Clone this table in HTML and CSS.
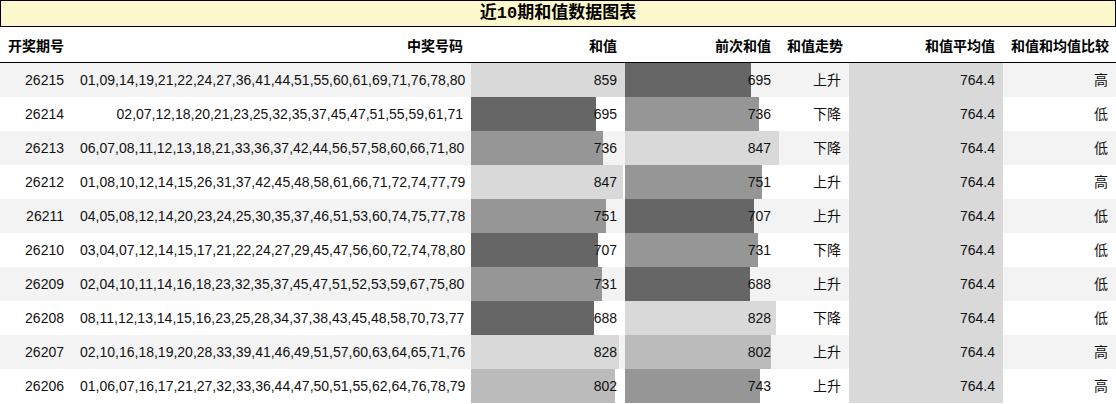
FILE: index.html
```html
<!DOCTYPE html>
<html lang="zh">
<head>
<meta charset="utf-8">
<title>近10期和值数据图表</title>
<link rel="stylesheet" href="styles.css">
</head>
<body>
<div class="title">近10期和值数据图表</div>
<table class="grid">
  <colgroup>
    <col class="c-issue"><col class="c-nums"><col class="c-sum"><col class="c-prev"><col class="c-trend"><col class="c-avg"><col class="c-cmp">
  </colgroup>
  <thead>
    <tr><th>开奖期号</th><th>中奖号码</th><th>和值</th><th>前次和值</th><th>和值走势</th><th>和值平均值</th><th>和值和均值比较</th></tr>
  </thead>
  <tbody>
    <tr><td>26215</td><td>01,09,14,19,21,22,24,27,36,41,44,51,55,60,61,69,71,76,78,80</td><td class="bar g4" style="--w:100%">859</td><td class="bar g1" style="--w:82.05%">695</td><td>上升</td><td class="avg">764.4</td><td>高</td></tr>
    <tr><td>26214</td><td>02,07,12,18,20,21,23,25,32,35,37,45,47,51,55,59,61,71</td><td class="bar g1" style="--w:80.91%">695</td><td class="bar g2" style="--w:86.89%">736</td><td>下降</td><td class="avg">764.4</td><td>低</td></tr>
    <tr><td>26213</td><td>06,07,08,11,12,13,18,21,33,36,37,42,44,56,57,58,60,66,71,80</td><td class="bar g2" style="--w:85.68%">736</td><td class="bar g4" style="--w:100%">847</td><td>下降</td><td class="avg">764.4</td><td>低</td></tr>
    <tr><td>26212</td><td>01,08,10,12,14,15,26,31,37,42,45,48,58,61,66,71,72,74,77,79</td><td class="bar g4" style="--w:98.60%">847</td><td class="bar g2" style="--w:88.67%">751</td><td>上升</td><td class="avg">764.4</td><td>高</td></tr>
    <tr><td>26211</td><td>04,05,08,12,14,20,23,24,25,30,35,37,46,51,53,60,74,75,77,78</td><td class="bar g2" style="--w:87.43%">751</td><td class="bar g1" style="--w:83.47%">707</td><td>上升</td><td class="avg">764.4</td><td>低</td></tr>
    <tr><td>26210</td><td>03,04,07,12,14,15,17,21,22,24,27,29,45,47,56,60,72,74,78,80</td><td class="bar g1" style="--w:82.31%">707</td><td class="bar g2" style="--w:86.30%">731</td><td>下降</td><td class="avg">764.4</td><td>低</td></tr>
    <tr><td>26209</td><td>02,04,10,11,14,16,18,23,32,35,37,45,47,51,52,53,59,67,75,80</td><td class="bar g2" style="--w:85.10%">731</td><td class="bar g1" style="--w:81.23%">688</td><td>上升</td><td class="avg">764.4</td><td>低</td></tr>
    <tr><td>26208</td><td>08,11,12,13,14,15,16,23,25,28,34,37,38,43,45,48,58,70,73,77</td><td class="bar g1" style="--w:80.09%">688</td><td class="bar g4" style="--w:97.76%">828</td><td>下降</td><td class="avg">764.4</td><td>低</td></tr>
    <tr><td>26207</td><td>02,10,16,18,19,20,28,33,39,41,46,49,51,57,60,63,64,65,71,76</td><td class="bar g4" style="--w:96.39%">828</td><td class="bar g3" style="--w:94.69%">802</td><td>上升</td><td class="avg">764.4</td><td>高</td></tr>
    <tr><td>26206</td><td>01,06,07,16,17,21,27,32,33,36,44,47,50,51,55,62,64,76,78,79</td><td class="bar g3" style="--w:93.36%">802</td><td class="bar g2" style="--w:87.72%">743</td><td>上升</td><td class="avg">764.4</td><td>高</td></tr>
  </tbody>
</table>
</body>
</html>
```

FILE: styles.css
```css
html, body {
  margin: 0;
  padding: 0;
  background: #fff;
}
body {
  width: 1116px;
  font-family: "Liberation Sans", "Noto Sans CJK SC", sans-serif;
  font-size: 14px;
  color: #111;
}
.title {
  box-sizing: border-box;
  height: 27px;
  border: 1px solid #000;
  background: #fdf7cd;
  text-align: center;
  font-family: "Liberation Mono", "Noto Sans CJK SC", monospace;
  font-weight: bold;
  font-size: 17px;
  line-height: 25px;
  color: #000;
}
.grid {
  width: 1116px;
  table-layout: fixed;
  border-collapse: separate;
  border-spacing: 0;
}
.c-issue { width: 72px; }
.c-nums { width: 399px; }
.c-sum { width: 154px; }
.c-prev { width: 154px; }
.c-trend { width: 70px; }
.c-avg { width: 154px; }
.c-cmp { width: 113px; }
.grid th {
  height: 35px;
  padding: 0 8px;
  text-align: right;
  font-weight: bold;
  color: #000;
  border-bottom: 1px solid #000;
  white-space: nowrap;
}
.grid td {
  height: 34px;
  padding: 0 8px;
  text-align: right;
  white-space: nowrap;
  line-height: 34px;
}
.grid tbody tr:nth-child(odd) td {
  background-color: #f3f3f3;
}
.grid tbody tr td.avg {
  background: #d9d9d9;
}
.grid tbody tr td.bar {
  background-image: linear-gradient(90deg, var(--c) var(--w), transparent var(--w));
}
.g1 { --c: #666666; }
.g2 { --c: #969696; }
.g3 { --c: #bbbbbb; }
.g4 { --c: #d9d9d9; }
```
